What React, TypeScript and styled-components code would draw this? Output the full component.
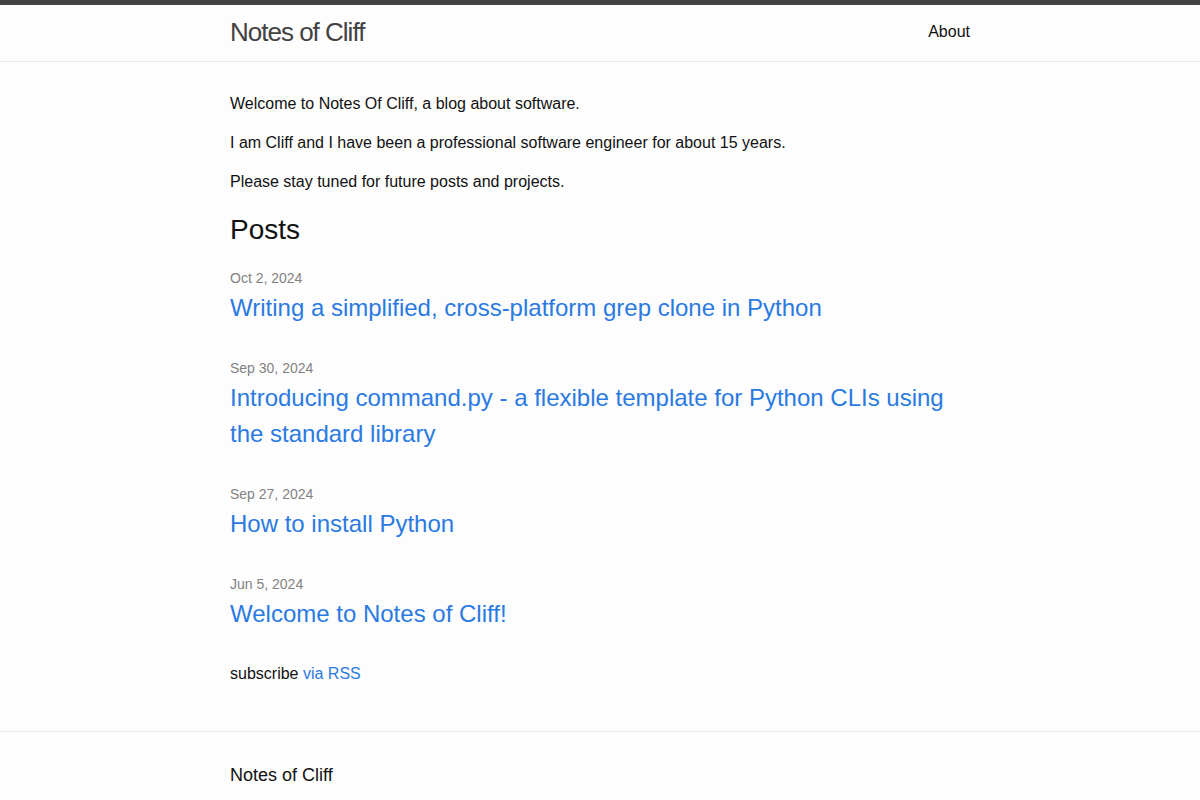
import React from "react";
import styled, { createGlobalStyle } from "styled-components";

const GlobalStyle = createGlobalStyle`
  html, body {
    margin: 0;
    padding: 0;
  }
  body {
    font-family: "Liberation Sans", Arial, Helvetica, sans-serif;
    font-size: 16px;
    line-height: 1.5;
    font-weight: 400;
    color: #111;
    background-color: #fdfdfd;
  }
`;

interface Post {
  date: string;
  title: string;
}

const posts: Post[] = [
  { date: "Oct 2, 2024", title: "Writing a simplified, cross-platform grep clone in Python" },
  {
    date: "Sep 30, 2024",
    title: "Introducing command.py - a flexible template for Python CLIs using the standard library",
  },
  { date: "Sep 27, 2024", title: "How to install Python" },
  { date: "Jun 5, 2024", title: "Welcome to Notes of Cliff!" },
];

export default function App() {
  return (
    <>
      <GlobalStyle />
      <SiteHeader>
        <Wrapper>
          <HeaderRow>
            <SiteTitle href="#">Notes of Cliff</SiteTitle>
            <Nav>
              <NavLink href="#">About</NavLink>
            </Nav>
          </HeaderRow>
        </Wrapper>
      </SiteHeader>

      <PageContent>
        <Wrapper>
          <Para>Welcome to Notes Of Cliff, a blog about software.</Para>
          <Para>I am Cliff and I have been a professional software engineer for about 15 years.</Para>
          <Para>Please stay tuned for future posts and projects.</Para>

          <ListHeading>Posts</ListHeading>
          <PostList>
            {posts.map((p) => (
              <PostItem key={p.title}>
                <PostMeta>{p.date}</PostMeta>
                <PostTitle>
                  <PostLink href="#">{p.title}</PostLink>
                </PostTitle>
              </PostItem>
            ))}
          </PostList>

          <Para>
            subscribe <Link href="#">via RSS</Link>
          </Para>
        </Wrapper>
      </PageContent>

      <SiteFooter>
        <Wrapper>
          <FooterHeading>Notes of Cliff</FooterHeading>
        </Wrapper>
      </SiteFooter>
    </>
  );
}

const Wrapper = styled.div`
  max-width: 740px;
  margin: 0 auto;
  padding: 0 30px;
`;

const SiteHeader = styled.header`
  border-top: 5px solid #424242;
  border-bottom: 1px solid #e8e8e8;
  min-height: 55.95px;
`;

const HeaderRow = styled.div`
  display: flex;
  justify-content: space-between;
  align-items: center;
`;

const SiteTitle = styled.a`
  font-size: 26px;
  font-weight: 300;
  line-height: 54px;
  letter-spacing: -1px;
  color: #424242;
  text-decoration: none;
`;

const Nav = styled.nav`
  line-height: 54px;
`;

const NavLink = styled.a`
  color: #111;
  text-decoration: none;
`;

const PageContent = styled.main`
  padding: 30px 0;
`;

const Para = styled.p`
  margin: 0 0 15px;
`;

const Link = styled.a`
  color: #2a7ae2;
  text-decoration: none;
`;

const ListHeading = styled.h2`
  font-size: 28px;
  font-weight: 400;
  line-height: 1.5;
  margin: 0 0 15px;
`;

const PostList = styled.ul`
  list-style: none;
  margin: 0;
  padding: 0;
`;

const PostItem = styled.li`
  margin-bottom: 30px;
`;

const PostMeta = styled.span`
  font-size: 14px;
  color: #828282;
`;

const PostTitle = styled.h3`
  margin: 0;
  font-weight: 400;
  font-size: 24px;
  line-height: 1.5;
`;

const PostLink = styled.a`
  display: block;
  color: #2a7ae2;
  text-decoration: none;
`;

const SiteFooter = styled.footer`
  border-top: 1px solid #e8e8e8;
  padding: 30px 0;
`;

const FooterHeading = styled.h2`
  font-size: 18px;
  font-weight: 400;
  line-height: 1.5;
  margin: 0 0 15px;
`;
